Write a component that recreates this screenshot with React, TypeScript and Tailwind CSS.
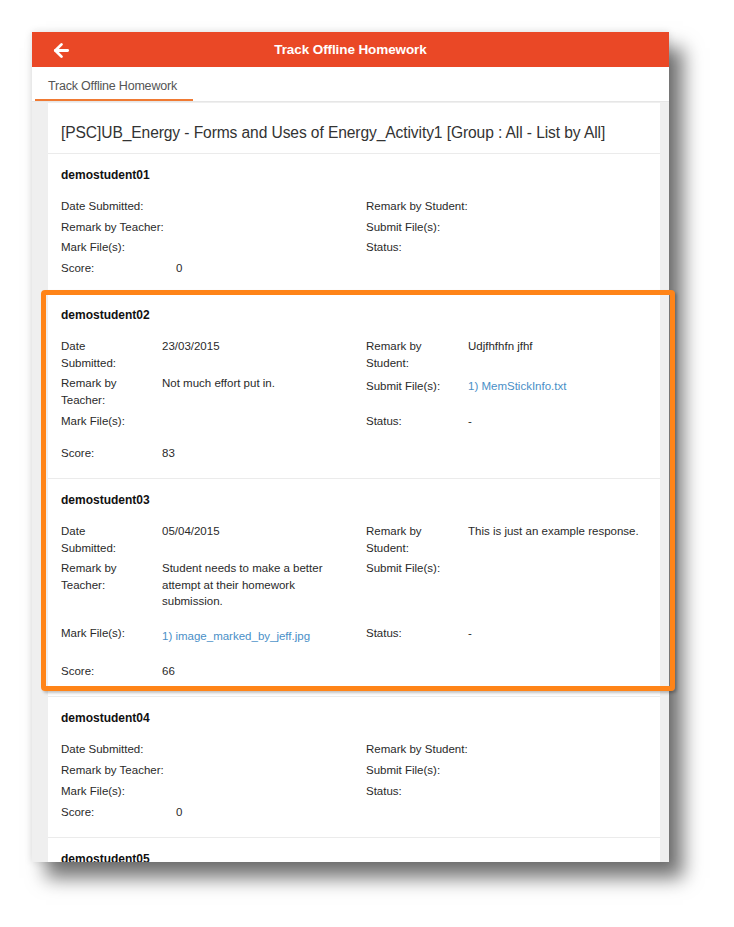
import React from "react";
import { ArrowLeft } from "lucide-react";

type Row = {
  l: string;
  lv?: React.ReactNode;
  r?: string;
  rv?: React.ReactNode;
  h: string;
  rOff?: string;
};

type Student = {
  name: string;
  wide: boolean;
  rows: Row[];
};

const Link = ({ children, off }: { children: React.ReactNode; off?: string }) => (
  <span className={`block text-[#4a8fc7] ${off ?? ""}`}>{children}</span>
);

const students: Student[] = [
  {
    name: "demostudent01",
    wide: true,
    rows: [
      { l: "Date Submitted:", r: "Remark by Student:", h: "h-[21px]" },
      { l: "Remark by Teacher:", r: "Submit File(s):", h: "h-[20px]" },
      { l: "Mark File(s):", r: "Status:", h: "h-[21px]" },
      { l: "Score:", lv: "0", h: "h-[16.5px]" },
    ],
  },
  {
    name: "demostudent02",
    wide: false,
    rows: [
      { l: "Date Submitted:", lv: "23/03/2015", r: "Remark by Student:", rv: "Udjfhfhfn jfhf", h: "h-[37px]" },
      {
        l: "Remark by Teacher:",
        lv: "Not much effort put in.",
        r: "Submit File(s):",
        rv: <Link>1) MemStickInfo.txt</Link>,
        h: "h-[38px]",
        rOff: "pt-[3px]",
      },
      { l: "Mark File(s):", r: "Status:", rv: "-", h: "h-[32px]" },
      { l: "Score:", lv: "83", h: "h-[16.5px]" },
    ],
  },
  {
    name: "demostudent03",
    wide: false,
    rows: [
      {
        l: "Date Submitted:",
        lv: "05/04/2015",
        r: "Remark by Student:",
        rv: "This is just an example response.",
        h: "h-[37px]",
      },
      {
        l: "Remark by Teacher:",
        lv: "Student needs to make a better attempt at their homework submission.",
        r: "Submit File(s):",
        h: "h-[65px]",
      },
      {
        l: "Mark File(s):",
        lv: <Link off="pt-[3px]">1) image_marked_by_jeff.jpg</Link>,
        r: "Status:",
        rv: "-",
        h: "h-[38px]",
      },
      { l: "Score:", lv: "66", h: "h-[16.5px]" },
    ],
  },
  {
    name: "demostudent04",
    wide: true,
    rows: [
      { l: "Date Submitted:", r: "Remark by Student:", h: "h-[21px]" },
      { l: "Remark by Teacher:", r: "Submit File(s):", h: "h-[21px]" },
      { l: "Mark File(s):", r: "Status:", h: "h-[21px]" },
      { l: "Score:", lv: "0", h: "h-[16.5px]" },
    ],
  },
  {
    name: "demostudent05",
    wide: true,
    rows: [],
  },
];

function StudentBlock({ s }: { s: Student }) {
  return (
    <div className="bg-white border-t border-[#ebebeb] pt-[13px] pb-[16.5px] pl-[13px] pr-[13px]">
      <div className="text-[12px] leading-[16px] font-bold text-[#111] mb-[15px]">{s.name}</div>
      {s.rows.map((row, i) => (
        <div key={i} className={`flex ${row.h} text-[11.5px] leading-[16.5px] text-[#2a2a2a]`}>
          <div className="flex w-[305px] shrink-0">
            <div className={s.wide ? "w-[115px] shrink-0" : "w-[101px] shrink-0 pr-[20px]"}>{row.l}</div>
            <div className="w-[186px]">{row.lv}</div>
          </div>
          {row.r && (
            <div className={`flex flex-1 ${row.rOff ?? ""}`}>
              <div className={s.wide ? "w-[130px] shrink-0" : "w-[102px] shrink-0 pr-[12px]"}>{row.r}</div>
              <div className="flex-1">{row.rv}</div>
            </div>
          )}
        </div>
      ))}
    </div>
  );
}

export default function App() {
  return (
    <div className="relative w-[734px] h-[927px] bg-white overflow-hidden font-['Liberation_Sans',Arial,sans-serif]">
      <div className="ml-[32px] mt-[32px] w-[637px] h-[830px] overflow-hidden bg-[#efefef] flex flex-col shadow-[14px_16px_18px_rgba(0,0,0,0.55),0_0_8px_rgba(0,0,0,0.12)]">
        {/* Header */}
        <div className="h-[35px] shrink-0 bg-[#ea4826] flex items-center relative">
          <div className="pl-[19px] pt-[1px] flex items-center">
            <ArrowLeft size={21} strokeWidth={3.2} color="#ffffff" />
          </div>
          <div className="absolute inset-0 pt-[2px] flex items-center justify-center text-white font-bold text-[13.5px] tracking-[-0.1px]">
            Track Offline Homework
          </div>
        </div>
        {/* Tabs */}
        <div className="h-[35px] shrink-0 bg-white flex items-stretch border-b border-[#e6e6e6]">
          <div className="ml-[3px] w-[158px] border-b-2 border-[#f07a33] flex items-center pl-[13px] pt-[6px] text-[12.5px] text-[#555] tracking-[-0.2px]">
            Track Offline Homework
          </div>
        </div>
        {/* Content */}
        <div className="flex-1 pl-[16px] pr-[9px] pt-[1px] overflow-hidden">
          <div className="bg-white">
            <div className="h-[50px] pl-[13px] pt-[20px] leading-[19px] text-[15.6px] text-[#333] tracking-[-0.1px]">
              [PSC]UB_Energy - Forms and Uses of Energy_Activity1 [Group : All - List by All]
            </div>
            {students.map((s) => (
              <StudentBlock key={s.name} s={s} />
            ))}
          </div>
        </div>
      </div>
      {/* Highlight overlay */}
      <div className="absolute left-[41px] top-[290px] w-[634px] h-[401px] border-[5px] border-[#ff8418] rounded-[4px] shadow-[2px_2px_3px_rgba(0,0,0,0.25)]" />
    </div>
  );
}
